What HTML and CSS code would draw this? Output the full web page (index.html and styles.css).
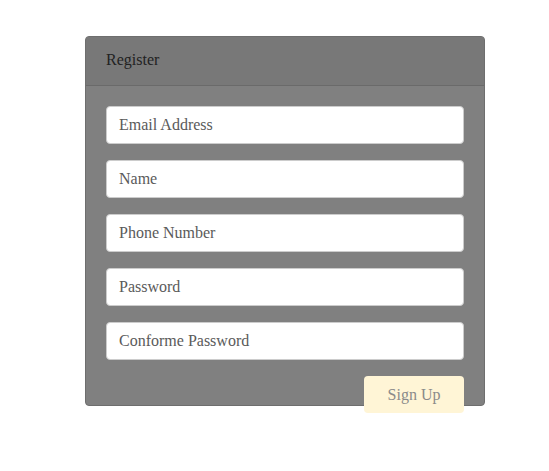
FILE: index.html
```html
<!DOCTYPE html>
<html>
<head>
<meta charset="utf-8">
<link rel="stylesheet" href="styles.css">
</head>
<body>
<div class="panel">
  <div class="panel-heading">Register</div>
  <div class="panel-body">
    <div class="field">Email Address</div>
    <div class="field">Name</div>
    <div class="field">Phone Number</div>
    <div class="field">Password</div>
    <div class="field">Conforme Password</div>
    <div class="actions"><button class="btn">Sign Up</button></div>
  </div>
</div>
</body>
</html>
```
FILE: styles.css
```css
html, body { margin: 0; padding: 0; background: #fff; }
body {
  font-family: "Liberation Serif", "Times New Roman", serif;
  font-size: 16px;
  padding-top: 36px;
  padding-bottom: 60px;
  min-height: 471px;
  box-sizing: border-box;
}
.panel {
  margin-left: 85px;
  width: 398px;
  border: 1px solid #6e6e6e;
  border-radius: 4px;
  background: #808080;
}
.panel-heading {
  height: 49px;
  box-sizing: border-box;
  padding: 0 20px 2px;
  display: flex;
  align-items: center;
  background: #787878;
  border-bottom: 1px solid #6a6a6a;
  color: #222;
  border-radius: 3px 3px 0 0;
}
.panel-body {
  padding: 20px 20px 0;
  display: flex;
  flex-direction: column;
  gap: 16px;
}
.field {
  height: 38px;
  box-sizing: border-box;
  background: #fff;
  border: 1px solid #ccc;
  border-radius: 4px;
  padding: 0 12px;
  display: flex;
  align-items: center;
  color: #5a5a5a;
}
.actions {
  height: 37px;
  margin-bottom: -8px;
  display: flex;
  justify-content: flex-end;
}
.btn {
  width: 100px;
  height: 37px;
  border: none;
  border-radius: 4px;
  background: #fff5d6;
  color: #8a8a8a;
  font-family: inherit;
  font-size: 16px;
  padding: 0;
  position: relative;
  z-index: 1;
}
```
